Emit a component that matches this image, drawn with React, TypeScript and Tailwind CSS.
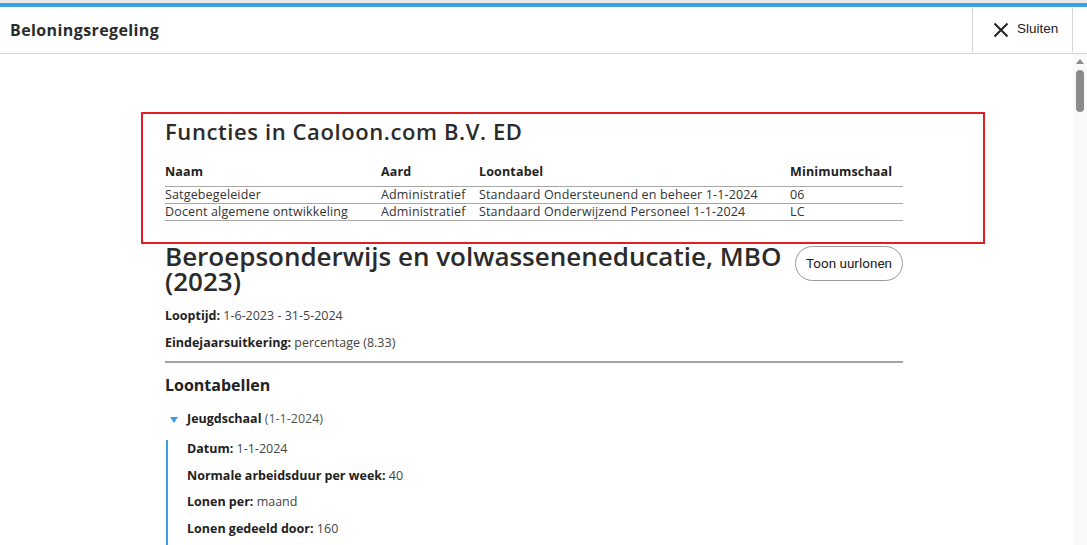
const font = { fontFamily: '"Open Sans", "DejaVu Sans", sans-serif' }

const functies = [
  {
    naam: 'Satgebegeleider',
    aard: 'Administratief',
    loontabel: 'Standaard Ondersteunend en beheer 1-1-2024',
    schaal: '06'
  },
  {
    naam: 'Docent algemene ontwikkeling',
    aard: 'Administratief',
    loontabel: 'Standaard Onderwijzend Personeel 1-1-2024',
    schaal: 'LC'
  }
]

const details = [
  { label: 'Datum:', value: '1-1-2024' },
  { label: 'Normale arbeidsduur per week:', value: '40' },
  { label: 'Lonen per:', value: 'maand' },
  { label: 'Lonen gedeeld door:', value: '160' }
]

function CloseIcon(): JSX.Element {
  return (
    <svg width="16" height="16" viewBox="0 0 16 16" className="shrink-0">
      <path d="M1.5 1.5L14.5 14.5M14.5 1.5L1.5 14.5" stroke="#222" strokeWidth="2" />
    </svg>
  )
}

function Header(): JSX.Element {
  return (
    <div className="flex h-[47px] shrink-0 items-stretch justify-between border-b border-[#d4d4d4]">
      <h1
        className="flex items-center pl-[10px] text-[16px] font-bold tracking-[0.4px] text-[#2b2b2b]"
        style={font}
      >
        Beloningsregeling
      </h1>
      <div className="flex items-stretch pr-[14px]">
        <button
          className="my-[1px] flex w-[101px] items-center gap-[8px] border-x border-[#d4d4d4] pl-[20px] text-[13.5px] text-[#222]"
          style={{ fontFamily: '"Liberation Sans", Arial, sans-serif' }}
        >
          <CloseIcon />
          <span className="-mt-[2px]">Sluiten</span>
        </button>
      </div>
    </div>
  )
}

function Functies(): JSX.Element {
  return (
    <div className="relative pb-[23px]">
      <div className="pointer-events-none absolute -left-[24px] -top-[5px] h-[132px] w-[844px] border-2 border-[#e02020]" />
      <h2 className="text-[22px] font-semibold leading-[28px] tracking-[0.6px] text-[#2b2b2b]">
        Functies in Caoloon.com B.V. ED
      </h2>
      <table className="mt-[18px] w-full border-collapse text-[12.5px] tracking-[0.15px] text-[#333]">
        <thead>
          <tr className="border-b border-[#a8a8a8] text-left">
            <th className="w-[216px] pb-[4px] font-bold text-[#222]">Naam</th>
            <th className="w-[98px] pb-[4px] font-bold text-[#222]">Aard</th>
            <th className="w-[311px] pb-[4px] font-bold text-[#222]">Loontabel</th>
            <th className="pb-[4px] font-bold text-[#222]">Minimumschaal</th>
          </tr>
        </thead>
        <tbody>
          {functies.map((f) => (
            <tr key={f.naam} className="border-b border-[#a8a8a8] leading-[16px]">
              <td>{f.naam}</td>
              <td>{f.aard}</td>
              <td>{f.loontabel}</td>
              <td>{f.schaal}</td>
            </tr>
          ))}
        </tbody>
      </table>
    </div>
  )
}

function Scrollbar(): JSX.Element {
  return (
    <div className="flex w-[14px] shrink-0 flex-col items-center bg-[#f9f9f9] pt-[5px]">
      <div className="h-0 w-0 border-x-[4px] border-b-[5px] border-x-transparent border-b-[#8a8a8a]" />
      <div className="mt-[6px] h-[42px] w-[8px] rounded-full bg-[#8a8a8a]" />
    </div>
  )
}

export default function App(): JSX.Element {
  return (
    <div className="flex h-[545px] flex-col overflow-hidden bg-white" style={font}>
      <div className="h-[3px] shrink-0 bg-[#e8e8e8]" />
      <div className="h-[4px] shrink-0 bg-[#3a9fe4]" />
      <Header />
      <div className="flex min-h-0 flex-1">
        <main className="min-w-0 flex-1 overflow-hidden">
          <div className="ml-[165px] w-[738px] pt-[63px] text-[#2b2b2b]">
            <Functies />
            <div className="flex items-start justify-between gap-[10px]">
              <h2 className="min-w-0 whitespace-nowrap text-[26px] font-semibold leading-[25px]">
                Beroepsonderwijs en volwasseneneducatie, MBO
                <br />
                (2023)
              </h2>
              <button
                className="mt-[2px] h-[35px] shrink-0 rounded-full border border-[#9a9a9a] px-[10px] text-[13.5px] text-[#222]"
                style={{ fontFamily: 'Roboto, sans-serif' }}
              >
                Toon uurlonen
              </button>
            </div>
            <p className="mt-[13px] text-[12.5px]">
              <span className="font-bold text-[#222]">Looptijd:</span>{' '}
              <span className="text-[#444]">1-6-2023 - 31-5-2024</span>
            </p>
            <p className="mt-[8px] text-[12.5px]">
              <span className="font-bold text-[#222]">Eindejaarsuitkering:</span>{' '}
              <span className="text-[#444]">percentage (8.33)</span>
            </p>
            <div className="mt-[9px] h-[2px] bg-[#a0a4a8]" />
            <h3 className="mt-[10px] text-[16px] font-bold text-[#222]">Loontabellen</h3>
            <div className="mt-[13px] flex items-center gap-[9px] pl-[5px] text-[12.5px]">
              <span className="h-0 w-0 border-x-[4px] border-t-[6px] border-x-transparent border-t-[#3a9fe4]" />
              <span>
                <span className="font-bold text-[#222]">Jeugdschaal</span>{' '}
                <span className="text-[#555]">(1-1-2024)</span>
              </span>
            </div>
            <div className="ml-[1px] mt-[11px] flex flex-col gap-[9.5px] border-l-2 border-[#3a9fe4] pl-[19px] text-[12.5px]">
              {details.map((d) => (
                <p key={d.label} className="leading-[17px]">
                  <span className="font-bold text-[#222]">{d.label}</span>{' '}
                  <span className="text-[#444]">{d.value}</span>
                </p>
              ))}
              <p className="leading-[17px]">&nbsp;</p>
              <p className="leading-[17px]">&nbsp;</p>
            </div>
          </div>
        </main>
        <Scrollbar />
      </div>
    </div>
  )
}
